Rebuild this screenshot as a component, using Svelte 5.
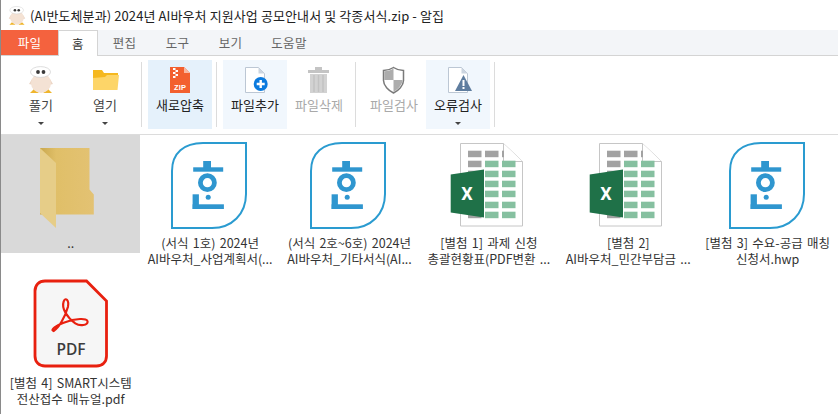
<script>
  const tabs = ['홈', '편집', '도구', '보기', '도움말']
  const files = [
    { kind: 'up', lines: ['..'], selected: true },
    { kind: 'hwp', lines: ['(서식 1호) 2024년', 'AI바우처_사업계획서(...'] },
    { kind: 'hwp', lines: ['(서식 2호~6호) 2024년', 'AI바우처_기타서식(AI...'] },
    { kind: 'xls', lines: ['[별첨 1] 과제 신청', '총괄현황표(PDF변환 ...'] },
    { kind: 'xls', lines: ['[별첨 2]', 'AI바우처_민간부담금 ...'] },
    { kind: 'hwp', lines: ['[별첨 3] 수요-공급 매칭', '신청서.hwp'] },
    { kind: 'pdf', lines: ['[별첨 4] SMART시스템', '전산접수 매뉴얼.pdf'] }
  ]
  const rows = [16.7, 26.7, 36.7, 46.7, 56.7, 67.7, 77.7]
</script>

{#snippet mascotShape()}
  <path d="M9 26l-4 4h9zM23 26l4 4h-9z" fill="#efb52c" />
  <path d="M7 16l-3 5 4 1zM25 16l3 5-4 1z" fill="#ecd6c6" />
  <ellipse cx="16" cy="20" rx="10" ry="10" fill="#f4e2d4" />
  <ellipse cx="15.500" cy="9" rx="10" ry="5.400" fill="#fff" stroke="#cfcfcf" stroke-width=".7" />
  <circle cx="13" cy="9" r="1.900" fill="#3a3a3a" />
  <circle cx="18.500" cy="9" r="1.900" fill="#3a3a3a" />
{/snippet}

{#snippet mascot()}
  <svg class="ri" viewBox="0 0 32 32">{@render mascotShape()}</svg>
{/snippet}

{#snippet folder()}
  <svg class="ri" viewBox="0 0 32 32">
    <path d="M4 7h9l2 3h14v5H4z" fill="#f5b81f" />
    <path d="M4 27V15l12-1 2-2h12l-1.500 15z" fill="#fdd568" />
  </svg>
{/snippet}

{#snippet zip()}
  <svg class="ri" viewBox="0 0 32 32">
    <path d="M6 4h14l6 6v20H6z" fill="#f3602f" />
    <path d="M20 4l6 6h-6z" fill="#f9b8a2" />
    <path d="M9 5h2.500v2H9zM11.500 7H14v2h-2.500zM9 9h2.500v2H9zM11.500 11H14v2h-2.500zM9 13h2.500v2H9z" fill="#fff" />
    <text class="zip-text" x="16" y="26.500" text-anchor="middle">ZIP</text>
  </svg>
{/snippet}

{#snippet addFile()}
  <svg class="ri" viewBox="0 0 32 32">
    <path d="M6.500 4.500h13l6 6v19h-19z" fill="#fff" stroke="#bcc7d4" />
    <path d="M19.500 4.500l6 6h-6z" fill="#ccd5e0" />
    <circle cx="21.700" cy="21" r="7" fill="#0b7ade" />
    <path d="M21.700 17v8M17.700 21h8" stroke="#fff" stroke-width="2.400" />
  </svg>
{/snippet}

{#snippet trash()}
  <svg class="ri" viewBox="0 0 32 32">
    <path d="M12 4h7v3h-7zM5 7h21v3H5z" fill="#c4c4c4" />
    <path d="M7 11h17v19H7z" fill="#d2d2d2" />
    <path d="M11 12v17M15.500 12v17M20 12v17" stroke="#c2c2c2" stroke-width="1.500" />
  </svg>
{/snippet}

{#snippet shield()}
  <svg class="ri" viewBox="0 0 32 32">
    <path d="M15.500 4.500c3 2 6.500 3 10 3v10c0 5-5 10-10 12.500-5-2.500-10-7.500-10-12.500v-10c3.500 0 7-1 10-3z" fill="#fff" stroke="#7a7a7a" stroke-width="1.500" />
    <path d="M15.500 5.500v11.500H6.300V8.200c3.500 0 6.500-1 9.200-2.700zM15.500 17h9.200c-.5 5-5 9.500-9.200 12z" fill="#adadad" />
  </svg>
{/snippet}

{#snippet warn()}
  <svg class="ri" viewBox="0 0 32 32">
    <path d="M6.500 4.500h13l6 6v19h-19z" fill="#fff" stroke="#bcc7d4" />
    <path d="M19.500 4.500l6 6h-6z" fill="#ccd5e0" />
    <path d="M21.500 12L30 28H13z" fill="#5f7d9f" />
    <path d="M20.500 17h2v6h-2zM20.500 24h2v2h-2z" fill="#fff" />
  </svg>
{/snippet}

{#snippet hwp()}
  <svg class="fi" viewBox="0 1 100 100">
    <path d="M12 37C12 19 24 9 43 9H86V60C86 80 72 94 52 94H12Z" fill="#fff" stroke="#2a9bd0" stroke-width="2" />
    <g fill="#2f96cf">
      <rect x="43.200" y="27" width="7.800" height="7" />
      <rect x="33.200" y="33.300" width="30" height="4.400" />
      <rect x="32.600" y="60.300" width="6.300" height="14.700" />
      <rect x="32.600" y="70.300" width="31.300" height="4.700" />
      <circle cx="48.200" cy="63.300" r="2.500" />
    </g>
    <circle cx="47.400" cy="48.700" r="7" fill="none" stroke="#2f96cf" stroke-width="4.800" />
  </svg>
{/snippet}

{#snippet xls()}
  <svg class="fi" viewBox="0 1 100 100">
    <g transform="translate(-1 0)">
      <path d="M22.500 9.500h43l19 18v64.500h-62z" fill="#fff" stroke="#c6c6c6" />
      <path d="M65.500 9.500v18h19" fill="#fff" stroke="#c6c6c6" />
      {#each rows as y, i}
        <rect x="30" {y} width="13.500" height="6.500" fill="#a2a2a2" />
        <rect x="47" {y} width="13.500" height="6.500" fill={i === 0 ? '#a2a2a2' : '#86c0a0'} />
        {#if i === 0}
          <rect x="64" {y} width="2" height="6.500" fill="#a2a2a2" />
        {:else}
          <rect x="64" {y} width="13.500" height="6.500" fill="#86c0a0" />
        {/if}
      {/each}
      <path d="M12.700 40.500l33.300-5v48l-33.300-5z" fill="#1f7148" />
      <text class="xl" x="29" y="66" text-anchor="middle">X</text>
    </g>
  </svg>
{/snippet}

{#snippet pdf()}
  <svg class="fi" viewBox="0 1 100 100">
    <path d="M24 7h41.500l20 20v55c0 6-4 10-10 10H24c-6 0-10-4-10-10V17c0-6 4-10 10-10z" fill="#f6f6f6" stroke="#e8200f" stroke-width="2.800" />
    <g transform="translate(-20.700 -4) scale(.3333)">
      <path d="M160 183C175 175 195 140 203 110 207 90 195 80 190 95 183 115 200 142 225 160 240 170 262 165 262 155 262 143 225 145 190 158 170 165 148 180 160 183z" fill="none" stroke="#e8200f" stroke-width="6.500" />
    </g>
    <text class="pdf-text" x="50" y="81" text-anchor="middle">PDF</text>
  </svg>
{/snippet}

{#snippet upFolder()}
  <svg class="fi up" viewBox="0 1 100 100">
    <defs>
      <linearGradient id="back" x1="0" x2="1" y1="0" y2="0">
        <stop offset="0" stop-color="#c9a84f" />
        <stop offset=".3" stop-color="#e0bf68" />
        <stop offset="1" stop-color="#e3c273" />
      </linearGradient>
    </defs>
    <path d="M19 14h49.500v41.500l4.300 5v20H19z" fill="url(#back)" />
    <path d="M19 14l16 15v65l-16-15z" fill="#e6cd88" />
  </svg>
{/snippet}

<div class="window">
  <header class="title">
    <svg class="app" viewBox="0 0 32 32">{@render mascotShape()}</svg>
    <span>(AI반도체분과) 2024년 AI바우처 지원사업 공모안내서 및 각종서식.zip - 알집</span>
  </header>

  <nav class="tabs">
    <div class="tab file">파일</div>
    {#each tabs as t, i}
      <div class="tab" class:active={i === 0}>{t}</div>
    {/each}
  </nav>

  <section class="ribbon">
    <div class="group">
      <button class="rb">{@render mascot()}<span>풀기</span><i class="caret"></i></button>
      <button class="rb">{@render folder()}<span>열기</span><i class="caret"></i></button>
    </div>
    <div class="sep"></div>
    <div class="group">
      <button class="rb hi">{@render zip()}<span>새로압축</span></button>
    </div>
    <div class="sep"></div>
    <div class="group">
      <button class="rb soft">{@render addFile()}<span>파일추가</span></button>
      <button class="rb off">{@render trash()}<span>파일삭제</span></button>
    </div>
    <div class="sep"></div>
    <div class="group">
      <button class="rb off">{@render shield()}<span>파일검사</span></button>
      <button class="rb soft">{@render warn()}<span>오류검사</span><i class="caret"></i></button>
    </div>
    <div class="sep"></div>
  </section>

  <main class="grid">
    {#each files as f}
      <div class="cell" class:selected={f.selected}>
        {#if f.kind === 'up'}{@render upFolder()}
        {:else if f.kind === 'hwp'}{@render hwp()}
        {:else if f.kind === 'xls'}{@render xls()}
        {:else}{@render pdf()}{/if}
        <div class="label">
          {#each f.lines as line}<div>{line}</div>{/each}
        </div>
      </div>
    {/each}
  </main>
</div>

<style>
  :global(body) {
    margin: 0;
    background: #fff;
  }
  .window {
    width: 838px;
    height: 414px;
    box-sizing: border-box;
    border-left: 1px solid #8a8a8a;
    overflow: hidden;
    font-family: "Noto Sans CJK KR", "Noto Sans", sans-serif;
    font-size: 12px;
    color: #333;
    background: #fff;
  }
  .title {
    height: 30px;
    display: flex;
    align-items: center;
    gap: 2px;
    padding-left: 5px;
    color: #222;
    font-size: 13px;
    letter-spacing: 0.1px;
  }
  .app {
    width: 22px;
    height: 22px;
  }
  .tabs {
    height: 25px;
    display: flex;
    background: #f3f5f8;
    border-bottom: 1px solid #d4d4d4;
  }
  .tab {
    width: 54px;
    display: flex;
    align-items: center;
    justify-content: center;
    color: #666;
    font-size: 12.500px;
    letter-spacing: 0.3px;
  }
  .tab:nth-child(n + 3) {
    width: 53px;
  }
  .tab:last-child {
    width: 64px;
  }
  .tab.file {
    width: 57px;
    background: #f4623e;
    color: #fff;
  }
  .tab.active {
    width: 40px;
    height: 26px;
    box-sizing: border-box;
    background: #fff;
    color: #333;
    border: 1px solid #d4d4d4;
    border-bottom: none;
  }
  .ribbon {
    height: 79px;
    display: flex;
    align-items: stretch;
    padding: 4px 0 0 8px;
    box-sizing: border-box;
    border-bottom: 1px solid #dcdcdc;
  }
  .group {
    display: flex;
    height: 69px;
  }
  .rb {
    width: 64px;
    height: 69px;
    padding: 3px 0 0;
    border: none;
    background: none;
    display: flex;
    flex-direction: column;
    align-items: center;
    font: inherit;
    font-size: 13px;
    letter-spacing: 0.1px;
    color: #444;
    position: relative;
  }
  .rb span {
    margin-top: 2px;
    line-height: 16px;
  }
  .rb.hi {
    background: #e5f1fb;
    color: #222;
  }
  .rb.soft {
    background: #f1f7fd;
    color: #222;
  }
  .rb.off {
    color: #a9a9a9;
  }
  .ri {
    width: 32px;
    height: 32px;
    display: block;
  }
  .caret {
    position: absolute;
    left: 50%;
    bottom: 4px;
    margin-left: -3px;
    border: 3px solid transparent;
    border-top: 3px solid #444;
    border-bottom: none;
  }
  .sep {
    width: 1px;
    height: 65px;
    margin: 2px 6px 0 4px;
    background: #dcdcdc;
  }
  .zip-text {
    font: 700 7.500px "Liberation Sans", sans-serif;
    fill: #fff;
  }
  .grid {
    display: grid;
    grid-template-columns: repeat(6, 139.400px);
    grid-auto-rows: 140px;
    width: 837px;
  }
  .cell {
    align-self: start;
    display: flex;
    flex-direction: column;
    align-items: center;
    height: 118px;
    text-align: center;
  }
  .cell.selected {
    background: #d9d9d9;
  }
  .fi {
    width: 100px;
    height: 100px;
    display: block;
    flex: none;
  }
  .label {
    line-height: 15.500px;
    font-size: 12.500px;
    word-spacing: 1.500px;
    color: #333;
    white-space: nowrap;
  }
  .xl {
    font: 700 18px "Roboto", sans-serif;
    fill: #fff;
  }
  .pdf-text {
    font: 600 15.500px "Open Sans", sans-serif;
    fill: #3c3c3c;
  }
</style>
